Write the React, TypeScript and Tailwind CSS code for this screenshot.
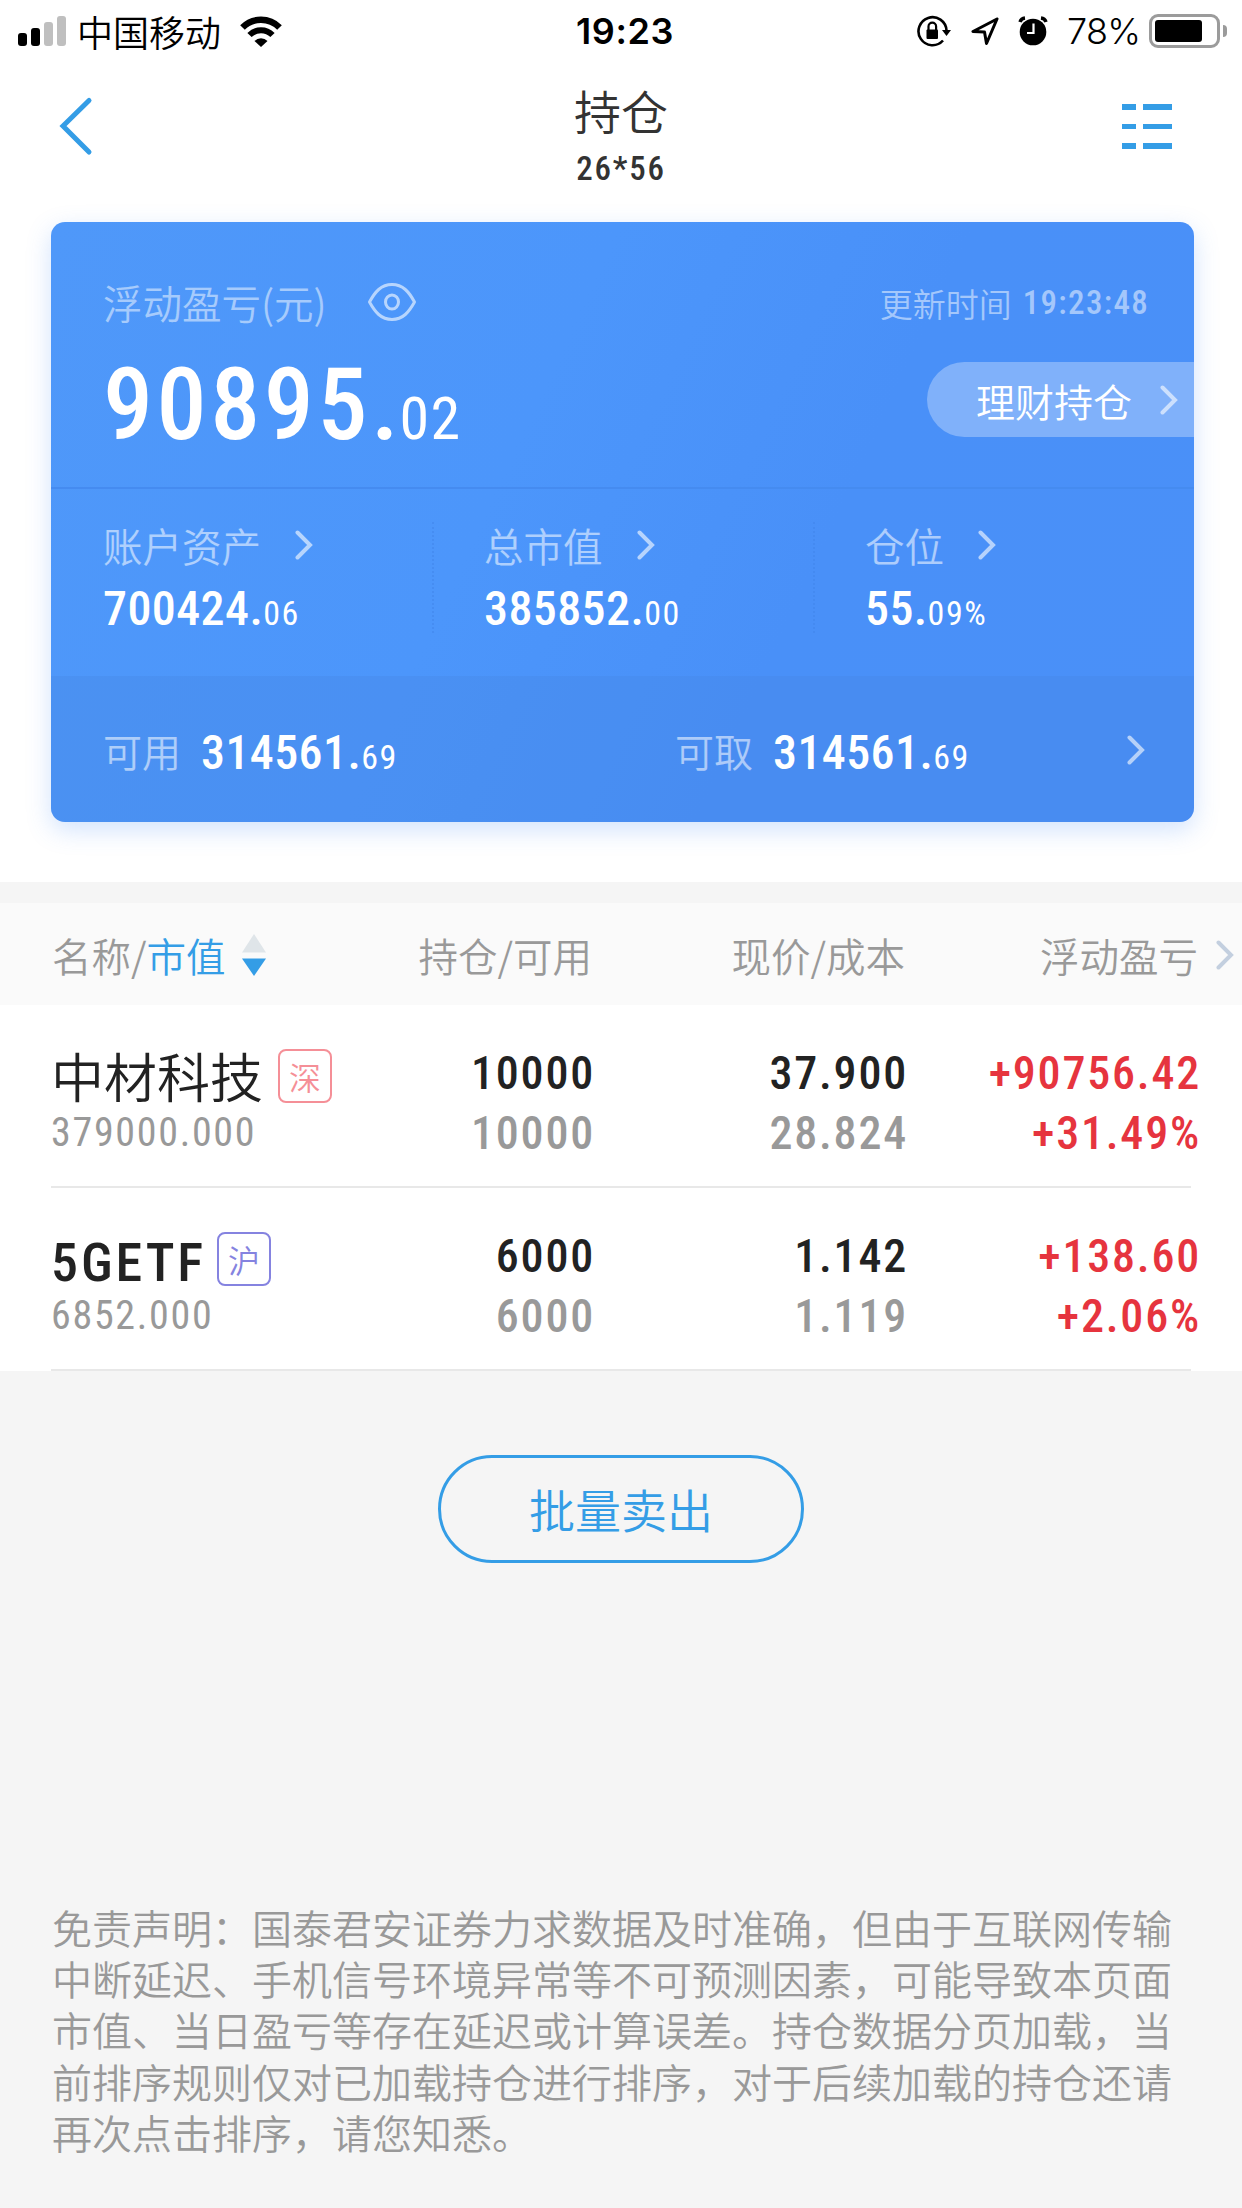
import type { ReactNode } from "react";

type Holding = {
  name: string;
  latin?: boolean;
  market: string;
  marketClass: string;
  marketValue: string;
  amount: string;
  available: string;
  price: string;
  cost: string;
  profit: string;
  profitRate: string;
};

const holdings: Holding[] = [
  {
    name: "中材科技",
    market: "深",
    marketClass: "border-[#f58f97] text-[#f58f97]",
    marketValue: "379000.000",
    amount: "10000",
    available: "10000",
    price: "37.900",
    cost: "28.824",
    profit: "+90756.42",
    profitRate: "+31.49%"
  },
  {
    name: "5GETF",
    latin: true,
    market: "沪",
    marketClass: "border-[#8583e0] text-[#8583e0]",
    marketValue: "6852.000",
    amount: "6000",
    available: "6000",
    price: "1.142",
    cost: "1.119",
    profit: "+138.60",
    profitRate: "+2.06%"
  }
];

function Chevron({ className }: { className: string }) {
  return (
    <svg viewBox="0 0 18 30" className={`h-[30px] w-[18px] shrink-0 ${className}`} fill="none" stroke="currentColor">
      <path d="M2.5 2.5 15 15 2.5 27.5" strokeWidth="4" strokeLinecap="round" strokeLinejoin="miter" />
    </svg>
  );
}

function StatusBar() {
  return (
    <div className="grid h-[62px] grid-cols-[576px_1fr_325px] items-center text-black">
      <div className="flex items-center pl-[18px]">
        <div className="flex h-[30px] items-end gap-1">
          <span className="h-[13px] w-[9px] rounded-[3px] bg-black" />
          <span className="h-[18px] w-[9px] rounded-[3px] bg-black" />
          <span className="h-6 w-[9px] rounded-[3px] bg-[#bfbfbf]" />
          <span className="h-[30px] w-[9px] rounded-[3px] bg-[#bfbfbf]" />
        </div>
        <span className="ml-[11px] text-[36px] leading-[60px]">中国移动</span>
        <svg viewBox="0 0 42 31" className="ml-[19px] h-[31px] w-[42px]">
          <path d="M2.5 11.5a26 26 0 0 1 37 0" fill="none" stroke="black" strokeWidth="6.5" />
          <path d="M9.5 19a16.200 16.200 0 0 1 23 0" fill="none" stroke="black" strokeWidth="6" />
          <path d="M14.500 25a9.200 9.200 0 0 1 13 0L21 31z" fill="black" />
        </svg>
      </div>
      <span className="font-[Inter] text-[36px] leading-[62px] font-semibold tracking-[0.600px]">19:23</span>
      <div className="flex items-center">
        <svg viewBox="0 0 34 32" className="h-8 w-[34px]" fill="none" stroke="black" strokeWidth="2.600">
          <path d="M29.500 15.500A14 14 0 1 0 26 25.500" />
          <path d="M25 15h9l-4.500 6z" fill="black" stroke="none" />
          <rect x="9.500" y="14.500" width="11.500" height="9.500" rx="1" fill="black" stroke="none" />
          <path d="M11.500 15v-3.500a3.800 3.800 0 0 1 7.600 0V15" strokeWidth="2.200" />
        </svg>
        <svg viewBox="0 0 28 28" className="ml-5 h-7 w-7" fill="none" stroke="black" strokeWidth="3">
          <path d="M26 2 2 14.500 13.500 15 15.500 26.500z" strokeLinejoin="round" />
        </svg>
        <svg viewBox="0 0 30 30" className="ml-[19px] h-[30px] w-[30px]">
          <circle cx="15" cy="16" r="13.300" />
          <path d="M2 6A6 6 0 0 1 7 2M23 2A6 6 0 0 1 28 6" stroke="black" strokeWidth="3.500" />
          <path d="M15.500 7.500v9.500H9" fill="none" stroke="white" strokeWidth="2.200" />
        </svg>
        <span className="ml-[19px] w-[82px] font-[Inter] text-[36px] leading-[62px] tracking-[-0.700px]">78%</span>
        <div className="h-[34px] w-[71px] rounded-[9px] border-3 border-[#9b9b9b] p-[3px]">
          <div className="h-[22px] w-[47px] rounded-[3px] bg-black" />
        </div>
        <span className="ml-[3px] h-3 w-1 rounded-r-full bg-[#9b9b9b]" />
      </div>
    </div>
  );
}

function NavBar() {
  return (
    <header className="flex h-40 items-start justify-between pr-[70px] pl-[58px]">
      <svg viewBox="0 0 36 60" className="mt-[34px] h-[60px] w-9" fill="none" stroke="#349de6">
        <path d="M31 4.500 5 30 31 56" strokeWidth="5" strokeLinecap="round" />
      </svg>
      <div className="ml-[26px] flex flex-col items-center text-[#333]">
        <h1 className="mt-[19px] text-[47px] leading-[58px]">持仓</h1>
        <p className="mt-[10px] font-[Roboto] text-[33px] leading-[40px] font-medium font-stretch-[85%] tracking-[1.800px]">
          26*56
        </p>
      </div>
      <div className="mt-[42px] flex w-[50px] flex-col gap-[14px]">
        {[0, 1, 2].map((row) => (
          <div key={row} className="flex gap-[7px]">
            <span className="h-[5.500px] w-[14px] bg-[#349de6]" />
            <span className="h-[5.500px] w-[29px] bg-[#349de6]" />
          </div>
        ))}
      </div>
    </header>
  );
}

function Amount({ whole, decimal }: { whole: string; decimal: string }) {
  return (
    <span className="font-[Roboto] text-[48px] leading-[50px] font-medium font-stretch-[85%] tracking-[0.400px] text-white">
      {whole}.<span className="text-[34px] font-normal tracking-[1.600px]">{decimal}</span>
    </span>
  );
}

function Metric({ label, children }: { label: string; children: ReactNode }) {
  return (
    <div className="flex flex-col">
      <div className="flex items-start gap-[34px]">
        <span className="text-[39.500px] leading-[46px] text-white/55">{label}</span>
        <Chevron className="mt-[8px] text-white/60" />
      </div>
      <div className="mt-[16px] flex h-[50px]">{children}</div>
    </div>
  );
}

function DashedDivider() {
  return <div className="h-[111px] w-0 border-l-2 border-dotted border-[#3f83ea]/50" />;
}

function AssetCard() {
  return (
    <section className="mx-[51px] h-[600px] w-[1143px] overflow-hidden rounded-[14px] bg-[linear-gradient(115deg,#4f98f9_0%,#4c96fb_40%,#4990f8_65%,#4a90f8_100%)] shadow-[0_8px_24px_rgba(74,144,248,0.25)]">
      <div className="flex h-[267px] justify-between border-b-2 border-[#458bf0] pl-[52px]">
        <div className="pt-[54px]">
          <div className="flex items-center">
            <span className="text-[39.500px] leading-[52px] text-white/50">浮动盈亏(元)</span>
            <svg viewBox="0 0 50 38" className="ml-[40px] h-[38px] w-[50px]" fill="none" stroke="white" strokeOpacity="0.600" strokeWidth="3">
              <path d="M2.500 19C8 9 14 1.500 25 1.500S42 9 47.500 19C42 29 36 36.500 25 36.500S8 29 2.500 19z" strokeLinejoin="round" />
              <ellipse cx="25" cy="19" rx="6.500" ry="7" />
            </svg>
          </div>
          <div className="mt-[25px] font-[Roboto] text-[100px] leading-[104px] font-medium font-stretch-[85%] tracking-[3.600px] text-white">
            90895.<span className="ml-[-3px] text-[60px] font-normal tracking-[1.500px]">02</span>
          </div>
        </div>
        <div className="flex flex-col items-end pt-[56px]">
          <p className="flex gap-[11px] pr-[45px] text-[33px] leading-[50px] text-white/50">
            更新时间
            <span className="font-[Roboto] font-medium font-stretch-[85%] tracking-[1.300px]">19:23:48</span>
          </p>
          <button className="mt-[34px] flex h-[75px] w-[267px] items-center justify-between rounded-l-full bg-white/30 pr-4 pl-[49px] text-[39px] leading-[50px] text-white">
            理财持仓
            <Chevron className="text-white/60" />
          </button>
        </div>
      </div>

      <div className="grid h-[187px] grid-cols-[329px_1px_380px_1px_1fr] items-start pt-[33px] pl-[52px]">
        <Metric label="账户资产">
          <Amount whole="700424" decimal="06" />
        </Metric>
        <DashedDivider />
        <div className="pl-[51px]">
          <Metric label="总市值">
            <Amount whole="385852" decimal="00" />
          </Metric>
        </div>
        <DashedDivider />
        <div className="pl-[51px]">
          <Metric label="仓位">
            <Amount whole="55" decimal="09%" />
          </Metric>
        </div>
      </div>

      <div className="flex h-[146px] items-start bg-[#4485e0]/30 pt-[52px] pr-[49px] pl-[52px]">
        <div className="flex w-[572px] gap-[20px]">
          <span className="text-[39px] leading-[44px] text-white/55">可用</span>
          <Amount whole="314561" decimal="69" />
        </div>
        <div className="flex gap-[20px]">
          <span className="text-[39px] leading-[44px] text-white/55">可取</span>
          <Amount whole="314561" decimal="69" />
        </div>
        <Chevron className="mt-[7px] ml-auto text-white/60" />
      </div>
    </section>
  );
}

function TableHeader() {
  return (
    <div className="flex h-[102px] items-center bg-[#fafafa] pt-[2px] pl-[52px] text-[39.500px] leading-[50px] text-[#999]">
      <div className="flex w-[308px] items-center">
        名称/<span className="text-[#349de6]">市值</span>
        <svg viewBox="0 0 24 42" className="ml-[17px] h-[42px] w-6">
          <path d="M12 0 24 18.500H0z" fill="#dfe5e9" />
          <path d="M0 24.500h24L12 42z" fill="#349de6" />
        </svg>
      </div>
      <span className="w-[232px] text-right">持仓/可用</span>
      <span className="w-[313px] text-right">现价/成本</span>
      <span className="w-[293px] text-right">浮动盈亏</span>
      <Chevron className="ml-[18px] text-[#c3cfdf]" />
    </div>
  );
}

function HoldingRow({ holding }: { holding: Holding }) {
  return (
    <div className="flex h-[183px] bg-white pl-[51px]">
      <div className="flex w-[1140px] shrink-0 border-b-2 border-[#e8e8e8] pt-[38px]">
        <div className="w-[300px] shrink-0 pt-[4px]">
          <div className="flex h-[58px] items-start text-[#222]">
            {holding.latin ? (
              <span className="mt-[4px] font-[Roboto] text-[54px] leading-[58px] font-medium font-stretch-[85%] tracking-[2.900px]">
                {holding.name}
              </span>
            ) : (
              <span className="mt-[4px] font-[Roboto,'Noto_Sans_CJK_SC'] text-[53px] leading-[58px]">{holding.name}</span>
            )}
            <span
              className={`mt-[2px] flex h-[54px] w-[54px] items-center justify-center rounded-[8px] border-2 text-[32px] leading-[50px] ${holding.latin ? "ml-[11px]" : "ml-[15px]"} ${holding.marketClass}`}
            >
              {holding.market}
            </span>
          </div>
          <p className="mt-[6px] font-[Roboto] text-[40px] leading-[44px] font-[450] font-stretch-[85%] tracking-[1.700px] text-[#999]">
            {holding.marketValue}
          </p>
        </div>
        <NumberPair width="w-[244px]" top={holding.amount} bottom={holding.available} />
        <NumberPair width="w-[313px]" top={holding.price} bottom={holding.cost} />
        <NumberPair width="w-[293px]" top={holding.profit} bottom={holding.profitRate} red />
      </div>
    </div>
  );
}

function NumberPair({ width, top, bottom, red = false }: { width: string; top: string; bottom: string; red?: boolean }) {
  return (
    <div
      className={`${width} shrink-0 text-right font-[Roboto] text-[46px] leading-[60px] font-medium font-stretch-[85%] tracking-[1.800px]`}
    >
      <p className={red ? "text-[#e6343e]" : "text-[#222]"}>{top}</p>
      <p className={red ? "text-[#e6343e]" : "text-[#999]"}>{bottom}</p>
    </div>
  );
}

export default function App() {
  return (
    <main className="flex h-[2208px] w-[1242px] flex-col overflow-hidden bg-[#f5f5f5] font-['Noto_Sans_CJK_SC',sans-serif] [font-weight:350]">
      <div className="h-[882px] shrink-0 bg-white">
        <StatusBar />
        <NavBar />
        <AssetCard />
      </div>

      <div className="mt-[21px]">
        <TableHeader />
        {holdings.map((holding) => (
          <HoldingRow key={holding.name} holding={holding} />
        ))}
      </div>

      <button className="mt-[84px] h-[108px] w-[366px] self-center rounded-full border-3 border-[#349de6] pb-[3px] text-[46px] leading-[60px] text-[#349de6]">
        批量卖出
      </button>

      <p className="mt-[339px] ml-[52px] w-[1124px] text-[40px] leading-[51.200px] text-[#999]">
        免责声明：国泰君安证券力求数据及时准确，但由于互联网传输中断延迟、手机信号环境异常等不可预测因素，可能导致本页面市值、当日盈亏等存在延迟或计算误差。持仓数据分页加载，当前排序规则仅对已加载持仓进行排序，对于后续加载的持仓还请再次点击排序，请您知悉。
      </p>
    </main>
  );
}
